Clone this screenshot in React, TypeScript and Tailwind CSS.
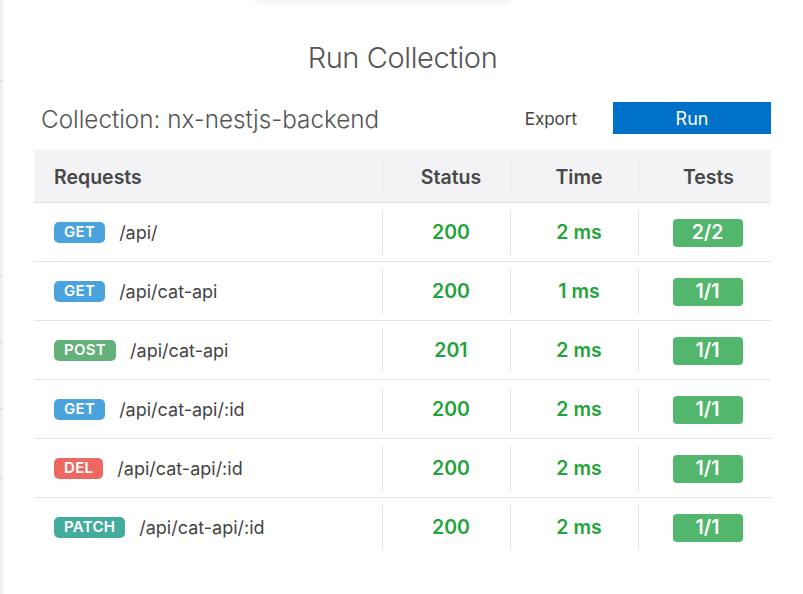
import React from "react";

type Row = { method: string; color: string; path: string; status: string; time: string; tests: string };

const rows: Row[] = [
  { method: "GET", color: "bg-[#4aa3dc]", path: "/api/", status: "200", time: "2 ms", tests: "2/2" },
  { method: "GET", color: "bg-[#4aa3dc]", path: "/api/cat-api", status: "200", time: "1 ms", tests: "1/1" },
  { method: "POST", color: "bg-[#64b07b]", path: "/api/cat-api", status: "201", time: "2 ms", tests: "1/1" },
  { method: "GET", color: "bg-[#4aa3dc]", path: "/api/cat-api/:id", status: "200", time: "2 ms", tests: "1/1" },
  { method: "DEL", color: "bg-[#ee6863]", path: "/api/cat-api/:id", status: "200", time: "2 ms", tests: "1/1" },
  { method: "PATCH", color: "bg-[#44ac9c]", path: "/api/cat-api/:id", status: "200", time: "2 ms", tests: "1/1" },
];

function Divider() {
  return <div className="absolute left-0 top-[6px] bottom-[6px] w-px bg-[#e4e4e4]" />;
}

export default function App() {
  return (
    <div
      className="relative flex h-[594px] w-[803px] overflow-hidden bg-white"
      style={{ fontFamily: "Inter, 'Liberation Sans', sans-serif" }}
    >
      <div className="pointer-events-none absolute left-[255px] top-[-12px] h-[12px] w-[255px] rounded-full shadow-[0_2px_10px_rgba(0,0,0,0.08)]" />
      <div className="flex w-[3px] shrink-0 flex-col bg-[#f1f1f1]">
        <div className="h-[80px]" />
        <div className="h-px bg-[#dcdcdc]" />
        <div className="h-[194px]" />
        <div className="h-px bg-[#dcdcdc]" />
        <div className="h-[66px]" />
        <div className="h-px bg-[#dcdcdc]" />
        <div className="h-[65px]" />
        <div className="h-px bg-[#dcdcdc]" />
        <div className="h-[69px]" />
        <div className="h-px bg-[#dcdcdc]" />
      </div>
      <div className="flex flex-1 flex-col pl-[31px] pr-[32px] pt-[38px]">
        <h1 className="text-center text-[29px] font-light leading-[40px] tracking-[-0.4px] text-[#555555]">
          Run Collection
        </h1>
        <div className="mt-[24px] flex h-[32px] items-center">
          <div className="flex-1 pl-[7px] pt-[5px] text-[24.25px] font-light text-[#555555]">
            Collection: nx-nestjs-backend
          </div>
          <button className="mr-[36px] pt-[3px] text-[17px] text-[#444444]">Export</button>
          <button className="h-[32px] w-[158px] bg-[#0071c9] text-[18px] text-white">Run</button>
        </div>
        <div className="mt-[16px] w-[737px]">
          <div className="flex h-[52px] items-center bg-[#f3f2f5] pt-[3px] text-[19.5px] font-semibold text-[#484848]">
            <div className="w-[348px] pl-[20px]">Requests</div>
            <div className="relative flex h-full w-[128px] items-center justify-center pl-[10px]">
              <Divider />
              Status
            </div>
            <div className="relative flex h-full w-[128px] items-center justify-center pl-[10px]">
              <Divider />
              Time
            </div>
            <div className="relative flex h-full w-[133px] items-center justify-center pl-[8px]">
              <Divider />
              Tests
            </div>
          </div>
          {rows.map((r, i) => (
            <div key={i} className="flex h-[59px] items-center border-t border-[#e3e3e3] pt-[1px]">
              <div className="flex w-[348px] items-center pl-[20px]">
                <span
                  className={`${r.color} flex h-[21px] items-center rounded-[5px] px-[10px] text-[15px] font-semibold tracking-[0.3px] text-white`}
                >
                  {r.method}
                </span>
                <span className="ml-[14px] text-[18px] text-[#444444]">{r.path}</span>
              </div>
              <div className="relative flex h-full w-[128px] items-center justify-center pl-[10px] text-[19.5px] font-semibold text-[#1fa43a]">
                <Divider />
                {r.status}
              </div>
              <div className="relative flex h-full w-[128px] items-center justify-center pl-[10px] text-[19.5px] font-semibold text-[#1fa43a]">
                <Divider />
                {r.time}
              </div>
              <div className="relative flex h-full w-[133px] items-center justify-center pl-[6px]">
                <Divider />
                <span className="flex h-[28px] w-[70px] items-center justify-center rounded-[4px] bg-[#52b76c] text-[19.5px] font-semibold text-white">
                  {r.tests}
                </span>
              </div>
            </div>
          ))}
        </div>
      </div>
    </div>
  );
}
